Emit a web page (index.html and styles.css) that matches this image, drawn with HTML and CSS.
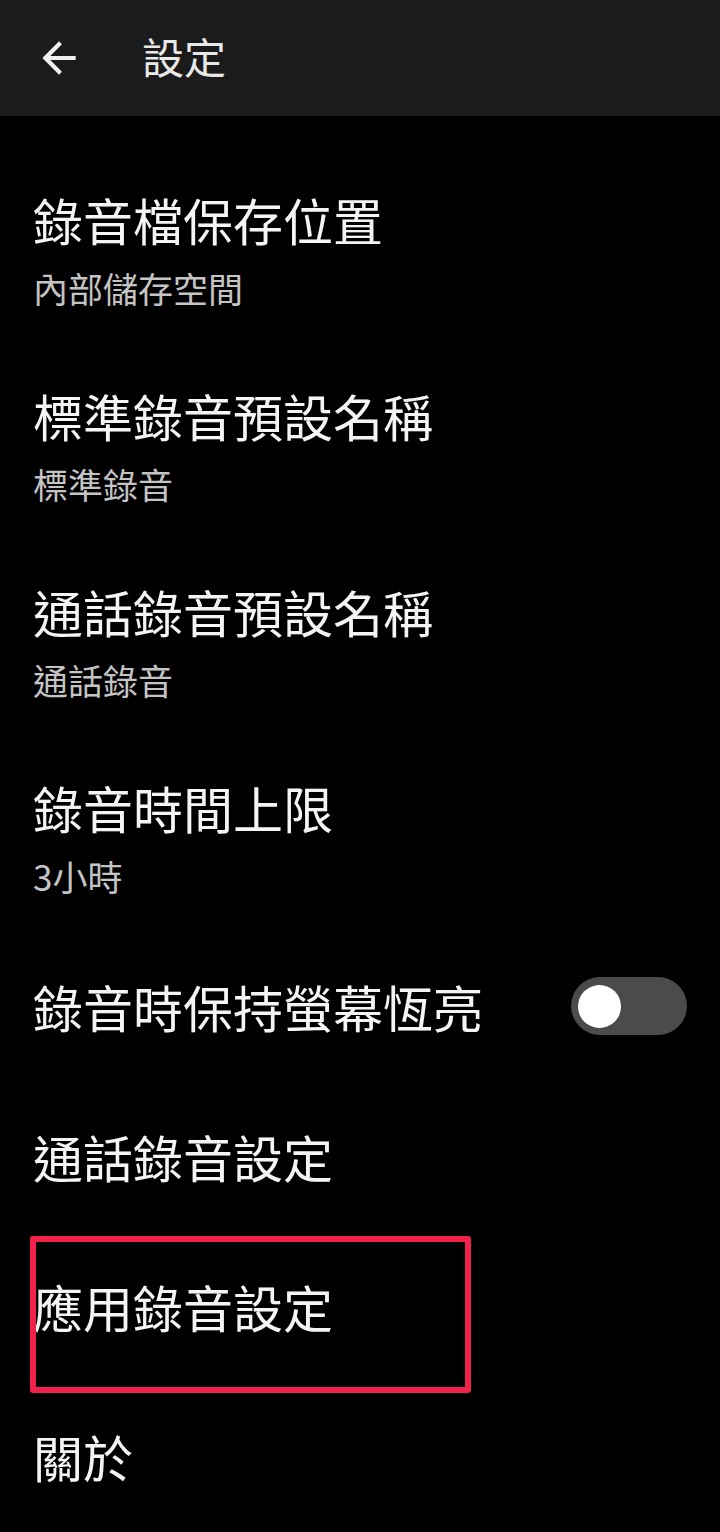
FILE: index.html
```html
<!DOCTYPE html>
<html lang="zh-Hant">
<head>
<meta charset="utf-8">
<title>設定</title>
<link rel="stylesheet" href="styles.css">
</head>
<body>
<div class="screen">
  <header class="appbar">
    <svg class="back" viewBox="0 0 24 24" aria-hidden="true"><path d="M20 11H7.83l5.59-5.59L12 4l-8 8 8 8 1.41-1.41L7.83 13H20v-2z"/></svg>
    <h1 class="appbar-title">設定</h1>
  </header>
  <main class="list">
    <div class="row two">
      <div class="title">錄音檔保存位置</div>
      <div class="sub">內部儲存空間</div>
    </div>
    <div class="row two">
      <div class="title">標準錄音預設名稱</div>
      <div class="sub">標準錄音</div>
    </div>
    <div class="row two">
      <div class="title">通話錄音預設名稱</div>
      <div class="sub">通話錄音</div>
    </div>
    <div class="row two">
      <div class="title">錄音時間上限</div>
      <div class="sub">3小時</div>
    </div>
    <div class="row one">
      <div class="title">錄音時保持螢幕恆亮</div>
      <div class="switch"><div class="thumb"></div></div>
    </div>
    <div class="row one">
      <div class="title">通話錄音設定</div>
    </div>
    <div class="row one marked">
      <div class="title">應用錄音設定</div>
      <div class="highlight"></div>
    </div>
    <div class="row one">
      <div class="title">關於</div>
    </div>
  </main>
</div>
</body>
</html>
```

FILE: styles.css
```css
html, body {
  margin: 0;
  padding: 0;
  background: #000;
}
body {
  font-family: "Noto Sans CJK TC", "Noto Sans", Roboto, sans-serif;
  color: #f2f2f2;
}
.screen {
  width: 720px;
  height: 1532px;
  overflow: hidden;
  background: #000;
}
.appbar {
  height: 116px;
  background: #1b1b1b;
  display: flex;
  align-items: center;
  padding-left: 34px;
  box-sizing: border-box;
}
.back {
  width: 50px;
  height: 50px;
  fill: #f0f0f0;
  margin-right: 58px;
  flex: none;
}
.appbar-title {
  margin: 0;
  font-size: 42px;
  font-weight: 400;
  line-height: 52px;
  color: #e8e8e8;
  margin-top: -4px;
}
.list {
  padding-top: 31px;
}
.row {
  box-sizing: border-box;
  padding-left: 33px;
  padding-right: 33px;
}
.row.two {
  height: 196px;
  padding-top: 42px;
}
.row.one {
  height: 150px;
  display: flex;
  align-items: center;
  justify-content: space-between;
}
.title {
  font-size: 50px;
  line-height: 60px;
  color: #f4f4f4;
  white-space: nowrap;
}
.sub {
  margin-top: 17px;
  font-size: 35px;
  line-height: 44px;
  color: #c4c4c4;
  white-space: nowrap;
}
.switch {
  width: 116px;
  height: 58px;
  border-radius: 29px;
  background: #4b4b4b;
  box-sizing: border-box;
  padding: 8px 7px;
  flex: none;
}
.thumb {
  width: 43px;
  height: 43px;
  border-radius: 50%;
  background: #fff;
}
.marked {
  position: relative;
}
.highlight {
  position: absolute;
  left: 30px;
  top: 5px;
  width: 441px;
  height: 157px;
  box-sizing: border-box;
  border: 6px solid #f0224c;
  border-radius: 3px;
}
```
